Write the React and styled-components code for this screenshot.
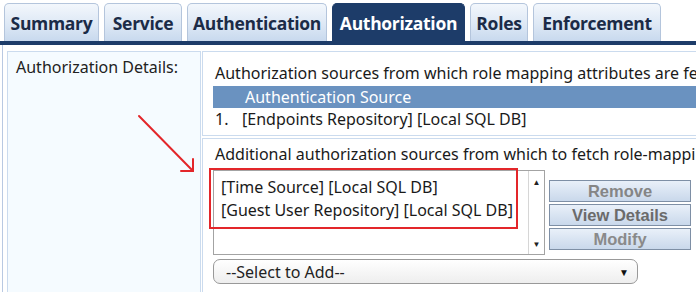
import React from "react";
import styled, { createGlobalStyle } from "styled-components";

const Global = createGlobalStyle`
  html, body { margin: 0; padding: 0; background: #ffffff; }
  body { font-family: "Noto Sans", "Open Sans", sans-serif; }
`;

const Page = styled.div`
  position: relative;
  width: 696px;
  height: 292px;
  overflow: hidden;
  background: #ffffff;
`;

const TabBar = styled.div`
  display: flex;
  align-items: flex-end;
  gap: 5px;
  height: 41px;
  padding-left: 4px;
  border-bottom: 4px solid #1d3c69;
`;

const Tab = styled.div`
  height: 38px;
  box-sizing: border-box;
  width: ${(p) => p.w}px;
  display: flex;
  align-items: center;
  justify-content: center;
  padding-top: 1px;
  font-family: "Open Sans", "Noto Sans", sans-serif;
  font-weight: 700;
  font-size: 17.5px;
  letter-spacing: -0.3px;
  border-radius: 5px 5px 0 0;
  border: 1px solid ${(p) => (p.active ? "#1d3c69" : "#b4c5dc")};
  border-bottom: none;
  color: ${(p) => (p.active ? "#ffffff" : "#1b2b47")};
  background: ${(p) =>
    p.active
      ? "#1d3c69"
      : "linear-gradient(#f3f7fc 0%, #dde8f5 55%, #c8d9ee 100%)"};
`;

const Body = styled.div`
  margin-left: 2px;
  border-left: 1px solid #b9c9e2;
  padding: 6px 0 0 4px;
  height: 260px;
  display: grid;
  grid-template-columns: 194px 620px;
  grid-template-rows: 85px 1fr;
  column-gap: 1px;
  row-gap: 2px;
`;

const LabelCell = styled.div`
  grid-row: 1 / span 2;
  background: #f5fbff;
  border: 1px solid #cbdbee;
  padding: 4px 8px;
  font-size: 16px;
  color: #222;
`;

const Cell = styled.div`
  background: #ffffff;
  border: 1px solid #cbdbee;
  padding: ${(p) => p.pad};
  display: flex;
  flex-direction: column;
`;

const Line = styled.div`
  font-size: 16px;
  line-height: 22px;
  color: #1a1a1a;
  white-space: nowrap;
  padding-left: 2px;
  margin-bottom: ${(p) => p.mb || 0}px;
`;

const HeadRow = styled.div`
  height: 22px;
  line-height: 22px;
  background: #6a92c0;
  color: #ffffff;
  font-size: 16px;
  padding-left: 32px;
  white-space: nowrap;
`;

const Num = styled.span`
  display: inline-block;
  width: 27px;
`;

const ListArea = styled.div`
  position: relative;
  display: flex;
  gap: 4px;
  margin-top: 5px;
`;

const ListBox = styled.div`
  width: 332px;
  height: 85px;
  box-sizing: border-box;
  border: 1px solid #a3a3a3;
  background: #fff;
  display: flex;
`;

const Items = styled.div`
  flex: 1;
  padding: 5px 7px;
`;

const Item = styled.div`
  font-size: 16px;
  line-height: 23px;
  color: #1a1a1a;
  white-space: nowrap;
`;

const Scroll = styled.div`
  width: 15px;
  border-left: 1px solid #d6d6d6;
  background: #ffffff;
  display: flex;
  flex-direction: column;
  justify-content: space-between;
  align-items: center;
  padding: 5px 0 5px;
  font-size: 8px;
  color: #222;
`;

const Buttons = styled.div`
  display: flex;
  flex-direction: column;
  gap: 2px;
  margin-top: 10px;
`;

const Btn = styled.div`
  width: 142px;
  height: 22px;
  box-sizing: border-box;
  border: 1px solid #7e8fa5;
  background: linear-gradient(#e9f0f9, #c9d8eb);
  font-family: "Liberation Sans", Arial, sans-serif;
  font-weight: 700;
  font-size: 16.5px;
  line-height: 20px;
  text-align: center;
  color: ${(p) => p.c};
`;

const Highlight = styled.div`
  position: absolute;
  left: -4px;
  top: -2px;
  width: 309px;
  height: 61px;
  box-sizing: border-box;
  border: 2px solid #e3262a;
  pointer-events: none;
`;

const Select = styled.div`
  margin-top: 4px;
  width: 425px;
  height: 25px;
  box-sizing: border-box;
  border: 1px solid #999;
  border-radius: 7px;
  background: linear-gradient(#ffffff, #eeeeee);
  display: flex;
  align-items: center;
  justify-content: space-between;
  padding: 0 8px 0 12px;
  font-size: 16px;
  color: #222;
`;

const Caret = styled.span`
  font-size: 10px;
  color: #111;
`;

const Arrow = styled.svg`
  position: absolute;
  left: 130px;
  top: 108px;
`;

export default function App() {
  return (
    <Page>
      <Global />
      <TabBar>
        <Tab w={95}>Summary</Tab>
        <Tab w={78}>Service</Tab>
        <Tab w={140}>Authentication</Tab>
        <Tab w={133} active>Authorization</Tab>
        <Tab w={58}>Roles</Tab>
        <Tab w={128}>Enforcement</Tab>
      </TabBar>
      <Body>
        <LabelCell>Authorization Details:</LabelCell>
        <Cell pad="10px 0 4px 10px">
          <Line mb={2}>Authorization sources from which role mapping attributes are fetched</Line>
          <HeadRow>Authentication Source</HeadRow>
          <Line>
            <Num>1.</Num>[Endpoints Repository] [Local SQL DB]
          </Line>
        </Cell>
        <Cell pad="4px 0 0 10px">
          <Line>Additional authorization sources from which to fetch role-mapping attributes</Line>
          <ListArea>
            <ListBox>
              <Items>
                <Item>[Time Source] [Local SQL DB]</Item>
                <Item>[Guest User Repository] [Local SQL DB]</Item>
              </Items>
              <Scroll>
                <span>▲</span>
                <span>▼</span>
              </Scroll>
            </ListBox>
            <Buttons>
              <Btn c="#858585">Remove</Btn>
              <Btn c="#6b6b6b">View Details</Btn>
              <Btn c="#8a8a8a">Modify</Btn>
            </Buttons>
            <Highlight />
          </ListArea>
          <Select>
            <span>--Select to Add--</span>
            <Caret>▼</Caret>
          </Select>
        </Cell>
      </Body>
      <Arrow width="70" height="70" viewBox="0 0 70 70">
        <g stroke="#e3262a" strokeWidth="2" fill="none" strokeLinecap="round">
          <line x1="9" y1="8" x2="63" y2="63" />
          <line x1="63" y1="63" x2="51" y2="63" />
          <line x1="63" y1="63" x2="63" y2="51" />
        </g>
      </Arrow>
    </Page>
  );
}
